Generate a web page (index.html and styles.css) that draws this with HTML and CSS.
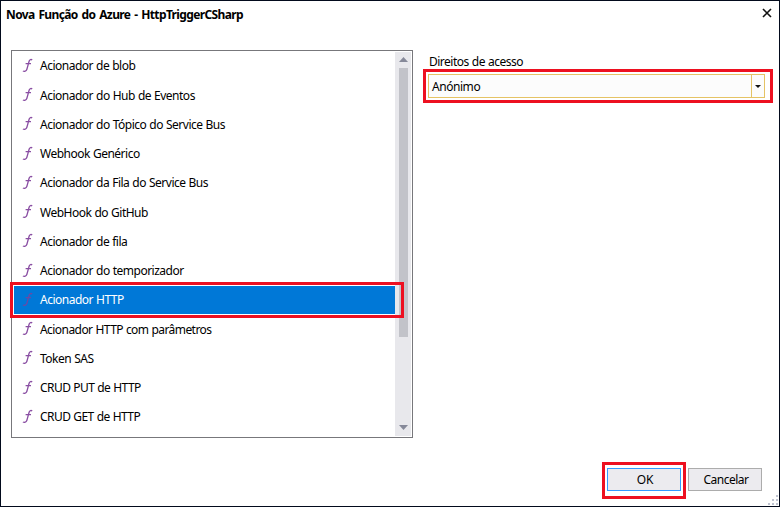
FILE: index.html
```html
<!DOCTYPE html>
<html lang="pt">
<head>
<meta charset="utf-8">
<title>Nova Função do Azure</title>
<link rel="stylesheet" href="styles.css">
</head>
<body>
<svg class="defs" width="0" height="0"><defs>
<symbol id="fn" viewBox="0 0 12 15"><path d="M10.2 1.9C9.2 1.2 7.8 1.4 7.2 3C6.5 5 5.6 9.4 4.8 11.4C4.1 13.2 2.4 13.8 .9 13M3.6 5.6H9" fill="none" stroke="currentColor" stroke-width="1.35"/></symbol>
</defs></svg>
<div class="dialog">
  <header class="titlebar">
    <h1>Nova Função do Azure - HttpTriggerCSharp</h1>
    <svg class="close" width="10" height="10" viewBox="0 0 10 10"><path d="M1 1L9 9M9 1L1 9" stroke="#111" stroke-width="1.6"/></svg>
  </header>
  <main class="content">
    <section class="listbox">
      <ul class="items">
        <li><svg class="icon"><use href="#fn"/></svg><span>Acionador de blob</span></li>
        <li><svg class="icon"><use href="#fn"/></svg><span>Acionador do Hub de Eventos</span></li>
        <li><svg class="icon"><use href="#fn"/></svg><span>Acionador do Tópico do Service Bus</span></li>
        <li><svg class="icon"><use href="#fn"/></svg><span>Webhook Genérico</span></li>
        <li><svg class="icon"><use href="#fn"/></svg><span>Acionador da Fila do Service Bus</span></li>
        <li><svg class="icon"><use href="#fn"/></svg><span>WebHook do GitHub</span></li>
        <li><svg class="icon"><use href="#fn"/></svg><span>Acionador de fila</span></li>
        <li><svg class="icon"><use href="#fn"/></svg><span>Acionador do temporizador</span></li>
        <li class="selected"><svg class="icon"><use href="#fn"/></svg><span>Acionador HTTP</span><i class="mark mark-row"></i></li>
        <li><svg class="icon"><use href="#fn"/></svg><span class="tight">Acionador HTTP com parâmetros</span></li>
        <li><svg class="icon"><use href="#fn"/></svg><span>Token SAS</span></li>
        <li><svg class="icon"><use href="#fn"/></svg><span class="tight">CRUD PUT de HTTP</span></li>
        <li><svg class="icon"><use href="#fn"/></svg><span class="tight">CRUD GET de HTTP</span></li>
      </ul>
      <div class="scrollbar">
        <svg width="9" height="5" viewBox="0 0 9 5"><path d="M0 5L4.5 0L9 5Z" fill="#868999"/></svg>
        <div class="thumb"></div>
        <svg class="down" width="9" height="5" viewBox="0 0 9 5"><path d="M0 0H9L4.5 5Z" fill="#868999"/></svg>
      </div>
    </section>
    <section class="access">
      <label>Direitos de acesso</label>
      <div class="combo">
        <span class="value">Anónimo</span>
        <span class="arrow"><svg width="6" height="3" viewBox="0 0 6 3"><path d="M0 0H6L3 3Z" fill="#111"/></svg></span>
        <i class="mark mark-combo"></i>
      </div>
    </section>
  </main>
  <footer class="actions">
    <div class="button primary"><span>OK</span><i class="mark mark-ok"></i></div>
    <div class="button"><span>Cancelar</span></div>
  </footer>
  <svg class="grip" width="12" height="12" viewBox="0 0 12 12"><path d="M9 1h2v2H9zM5 5h2v2H5zM9 5h2v2H9zM1 9h2v2H1zM5 9h2v2H5zM9 9h2v2H9z" fill="#bfc3d0"/></svg>
</div>
</body>
</html>
```
FILE: styles.css
```css
* { box-sizing: border-box; }
body {
  margin: 0;
  color: #000;
  font: 12px/16px "Noto Sans", "Open Sans", sans-serif;
  letter-spacing: -0.5px;
  word-spacing: 0.4px;
}
.defs { position: absolute; }
.dialog {
  position: relative;
  width: 780px;
  height: 507px;
  border: 1px solid #020a1c;
  background: #fff;
  display: flex;
  flex-direction: column;
  white-space: nowrap;
}
.titlebar {
  height: 49px;
  padding: 5px 7px 0 5px;
  display: flex;
  justify-content: space-between;
}
.titlebar h1 {
  margin: 0;
  font-size: 12px;
  line-height: 17px;
  font-weight: 700;
  letter-spacing: -0.62px;
  word-spacing: 1.3px;
}
.close { margin-top: 2px; }
.content {
  display: flex;
  padding-left: 10px;
  gap: 15px;
}
.listbox {
  width: 402px;
  height: 388px;
  border: 1px solid #77777b;
  display: flex;
  justify-content: space-between;
  padding: 0 1px 1px 2px;
}
.items {
  width: 381px;
  margin: 0;
  padding: 0;
  list-style: none;
}
.items li {
  position: relative;
  height: 27.25px;
  margin: 1.4px 0 2px;
  padding-left: 8px;
  display: flex;
  align-items: center;
  gap: 6px;
}
.items span { padding-top: 0.7px; }
.items .tight { letter-spacing: -0.56px; }
.items .selected { background: #0078d7; color: #fff; }
.items .selected span { padding-top: 0; }
.icon { width: 12px; height: 15px; margin-bottom: 1.5px; color: #8a4fa3; }
.selected .icon { color: #6a4aa5; }
.scrollbar {
  width: 16px;
  margin-top: 1px;
  background: #e8e8ec;
  display: flex;
  flex-direction: column;
  align-items: center;
  padding: 5px 0 6px;
}
.thumb {
  width: 9px;
  height: 269px;
  margin-top: 6px;
  background: #c2c3c9;
}
.down { margin-top: auto; }
.access { padding-top: 4px; }
.access label { display: block; height: 20px; padding-left: 1px; }
.combo {
  position: relative;
  width: 337px;
  height: 24px;
  border: 1px solid #e5c365;
  background: #fcfcfc;
  display: flex;
  align-items: center;
}
.value { flex: 1; padding: 1px 0 0 3px; letter-spacing: -0.45px; }
.arrow {
  width: 13px;
  height: 100%;
  border-left: 1px solid #e5c365;
  display: flex;
  align-items: center;
  justify-content: center;
}
.mark {
  position: absolute;
  border: 3px solid #ed1020;
  pointer-events: none;
}
.mark-row { left: -4px; top: -4px; width: 394px; height: 36px; }
.mark-combo { left: -6px; top: -6px; width: 350px; height: 34px; }
.mark-ok { left: -6px; top: -7px; width: 84px; height: 37px; }
.actions {
  display: flex;
  justify-content: flex-end;
  gap: 7px;
  margin-top: 30px;
  padding-right: 17px;
}
.button {
  position: relative;
  width: 74px;
  height: 23px;
  border: 1px solid #acacac;
  background: #ecebef;
  display: flex;
  align-items: center;
  justify-content: center;
}
.button span { padding: 1px 0 0 2px; }
.primary { border-color: #3399ff; letter-spacing: -0.2px; }
.grip { position: absolute; right: 0; bottom: 0; }
```
